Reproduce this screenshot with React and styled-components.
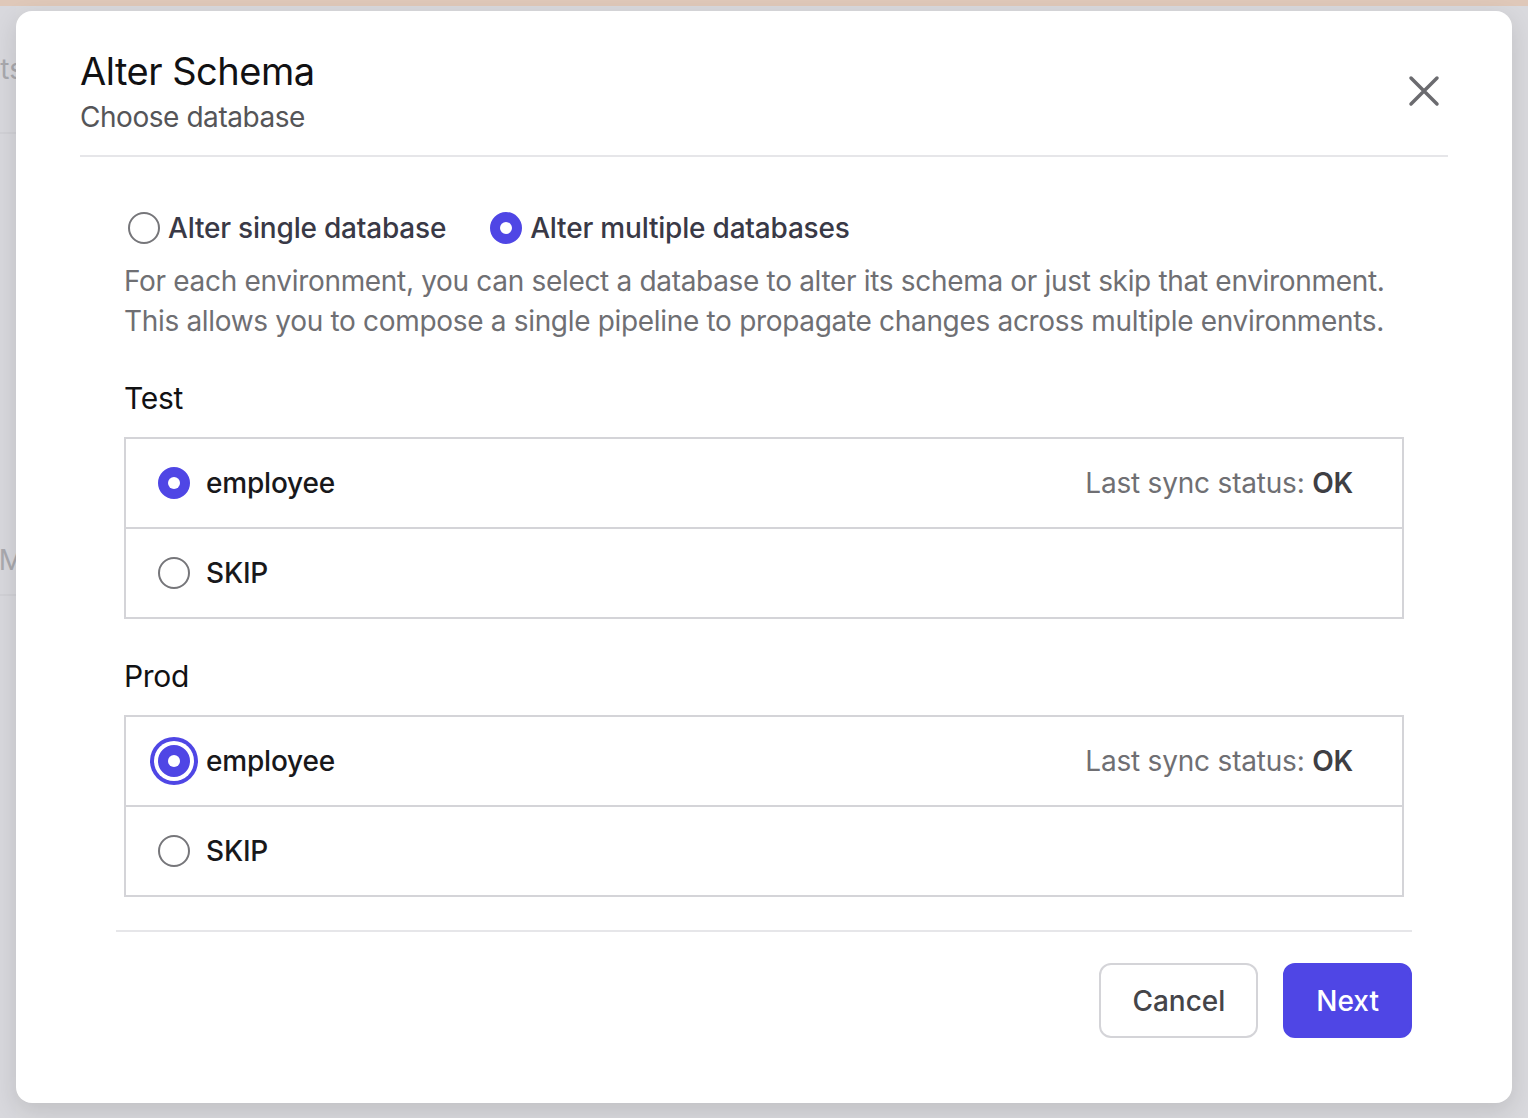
import { createGlobalStyle, styled } from "styled-components";

const GlobalStyle = createGlobalStyle`
  html, body {
    margin: 0;
    padding: 0;
  }
  body {
    background: #d9d9dd;
    font-family: Inter, "Noto Sans", sans-serif;
    -webkit-font-smoothing: antialiased;
  }
  * {
    box-sizing: border-box;
  }
`;

const Screen = styled.div`
  width: 1528px;
  height: 1118px;
  overflow: hidden;
  display: flex;
  flex-direction: column;
`;

const TopStrip = styled.div`
  height: 6px;
  background: #dfc8b9;
`;

const Stage = styled.div`
  flex: 1;
  display: flex;
`;

const Gutter = styled.div`
  width: 16px;
  overflow: hidden;
  display: flex;
  flex-direction: column;
  background: #d8d8dd;
`;

const GhostRow = styled.div`
  height: ${(p) => p.$h}px;
  flex-shrink: 0;
  display: flex;
  align-items: center;
  justify-content: flex-end;
  white-space: nowrap;
  font-size: 28px;
  line-height: 36px;
  color: #a9a9ae;
  border-bottom: ${(p) => (p.$line ? "2px solid #d1d1d6" : "none")};
`;

const GhostText = styled.span`
  margin-right: -8px;
`;

const Modal = styled.div`
  width: 1496px;
  height: 1092px;
  margin-top: 5px;
  background: #fff;
  border-radius: 16px;
  box-shadow: 0 8px 24px rgba(0, 0, 0, 0.12);
  display: flex;
  flex-direction: column;
`;

const Header = styled.div`
  margin: 0 64px;
  padding: 37px 0 20px;
  border-bottom: 2px solid #e6e6e9;
  display: flex;
  justify-content: space-between;
  align-items: flex-start;
`;

const Title = styled.h1`
  margin: 0;
  font-size: 38px;
  line-height: 46px;
  font-weight: 400;
  letter-spacing: -0.5px;
  color: #111113;
`;

const Subtitle = styled.p`
  margin: 5px 0 0;
  font-size: 28px;
  line-height: 36px;
  letter-spacing: -0.45px;
  color: #555558;
`;

const CloseButton = styled.button`
  width: 48px;
  height: 48px;
  margin-top: 19px;
  padding: 0;
  border: none;
  background: transparent;
  display: flex;
  align-items: center;
  justify-content: center;
  cursor: pointer;
`;

const Body = styled.div`
  margin: 0 108px;
`;

const ModeGroup = styled.div`
  margin-top: 51px;
  padding-left: 4px;
  display: flex;
  gap: 44px;
`;

const ModeOption = styled.label`
  display: flex;
  align-items: center;
  gap: 8px;
  height: 40px;
  font-size: 28px;
  font-weight: 500;
  letter-spacing: -0.2px;
  color: #393946;
  cursor: pointer;
`;

const Radio = styled.span`
  width: 32px;
  height: 32px;
  border-radius: 50%;
  flex-shrink: 0;
  display: flex;
  align-items: center;
  justify-content: center;
  background: ${(p) => (p.$checked ? "#4f46e5" : "#fff")};
  border: 2px solid ${(p) => (p.$checked ? "#4f46e5" : "#76767a")};
  box-shadow: ${(p) =>
    p.$focused ? "0 0 0 4px #fff, 0 0 0 8px #4f46e5" : "none"};

  &::after {
    content: "";
    display: ${(p) => (p.$checked ? "block" : "none")};
    width: 12px;
    height: 12px;
    border-radius: 50%;
    background: #fff;
  }
`;

const Description = styled.p`
  margin: 13px 0 0;
  font-size: 28px;
  line-height: 40px;
  letter-spacing: -0.32px;
  white-space: nowrap;
  color: #6f6f73;
`;

const EnvTitle = styled.h2`
  margin: 37px 0 0;
  font-size: 30px;
  line-height: 40px;
  font-weight: 400;
  letter-spacing: -0.3px;
  color: #111113;
`;

const DbTable = styled.div`
  margin-top: 19px;
  border: 2px solid #d4d4d8;
`;

const DbRow = styled.label`
  height: ${(p) => (p.$first ? 88 : 90)}px;
  padding: 0 49px 0 32px;
  display: flex;
  align-items: center;
  gap: 16px;
  border-top: ${(p) => (p.$first ? "none" : "2px solid #d4d4d8")};
  cursor: pointer;
`;

const DbName = styled.span`
  flex: 1;
  font-size: 28px;
  font-weight: 500;
  letter-spacing: -0.2px;
  color: #18181b;
`;

const SyncStatus = styled.span`
  font-size: 28px;
  letter-spacing: -0.2px;
  color: #6f6f73;

  b {
    font-weight: 600;
    color: #3f3f44;
  }
`;

const Footer = styled.div`
  margin: 33px 100px 0 100px;
  padding-top: 31px;
  border-top: 2px solid #e6e6e9;
  display: flex;
  justify-content: flex-end;
  gap: 25px;
`;

const Button = styled.button`
  height: 75px;
  padding: 0 31px;
  border-radius: 12px;
  font-family: inherit;
  font-size: 28px;
  font-weight: 500;
  cursor: pointer;
  border: 2px solid ${(p) => (p.$primary ? "#4f46e5" : "#d4d4d8")};
  background: ${(p) => (p.$primary ? "#4f46e5" : "#fff")};
  color: ${(p) => (p.$primary ? "#fff" : "#454549")};
`;

const environments = [
  { name: "Test", focused: false },
  { name: "Prod", focused: true },
];

function CloseIcon() {
  return (
    <svg width="32" height="32" viewBox="0 0 32 32" fill="none">
      <path
        d="M3 3L29 29M29 3L3 29"
        stroke="#6b6b6f"
        strokeWidth="3.5"
        strokeLinecap="round"
      />
    </svg>
  );
}

export default function App() {
  return (
    <>
      <GlobalStyle />
      <Screen>
        <TopStrip />
        <Stage>
          <Gutter>
            <GhostRow $h={128} $line>
              <GhostText>Accounts</GhostText>
            </GhostRow>
            <GhostRow $h={392} />
            <GhostRow $h={70} $line>
              <GhostText>M</GhostText>
            </GhostRow>
          </Gutter>
          <Modal>
            <Header>
              <div>
                <Title>Alter Schema</Title>
                <Subtitle>Choose database</Subtitle>
              </div>
              <CloseButton aria-label="Close">
                <CloseIcon />
              </CloseButton>
            </Header>
            <Body>
              <ModeGroup>
                <ModeOption>
                  <Radio />
                  Alter single database
                </ModeOption>
                <ModeOption>
                  <Radio $checked />
                  Alter multiple databases
                </ModeOption>
              </ModeGroup>
              <Description>
                For each environment, you can select a database to alter its schema or just skip that environment.
                <br />
                This allows you to compose a single pipeline to propagate changes across multiple environments.
              </Description>
              {environments.map((env) => (
                <div key={env.name}>
                  <EnvTitle>{env.name}</EnvTitle>
                  <DbTable>
                    <DbRow $first>
                      <Radio $checked $focused={env.focused} />
                      <DbName>employee</DbName>
                      <SyncStatus>
                        Last sync status: <b>OK</b>
                      </SyncStatus>
                    </DbRow>
                    <DbRow>
                      <Radio />
                      <DbName>SKIP</DbName>
                    </DbRow>
                  </DbTable>
                </div>
              ))}
            </Body>
            <Footer>
              <Button>Cancel</Button>
              <Button $primary>Next</Button>
            </Footer>
          </Modal>
        </Stage>
      </Screen>
    </>
  );
}
